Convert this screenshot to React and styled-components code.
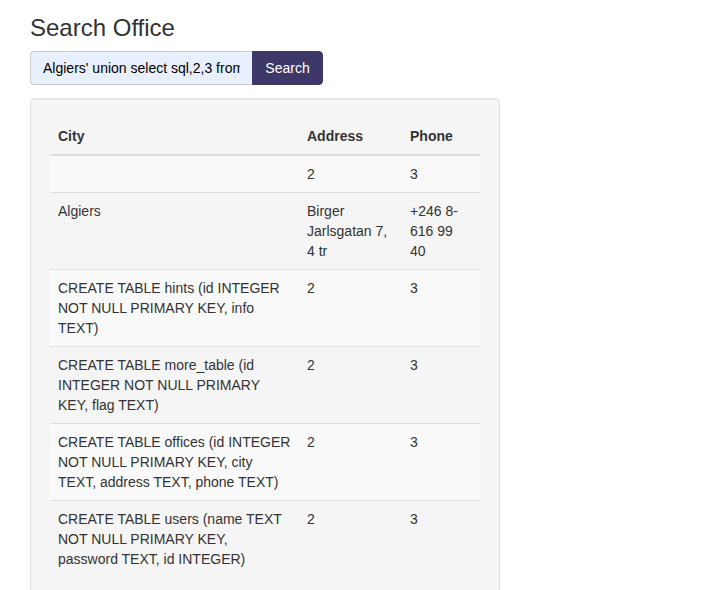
import React from 'react'
import styled, { createGlobalStyle } from 'styled-components'

const Global = createGlobalStyle`
body{
  margin:0;
  background:#fff;
  font-family:"Liberation Sans", Arial, sans-serif;
  font-size:14px;
  line-height:20px;
  color:#333;
}
*{box-sizing:border-box;}
`;

const Page = styled.div`
padding:15px 30px 0;
`;

const Title = styled.h3`
margin:0 0 10px;
font-size:24px;
font-weight:500;
line-height:26.4px;
color:#333;
`;

const SearchForm = styled.form`
display:flex;
width:293px;
`;

const Input = styled.input`
width:222px;
height:34px;
padding:6px 12px;
font-family:inherit;
font-size:14px;
color:#000;
background:#e8f0fe;
border:1px solid #ccc;
border-right:0;
border-radius:4px 0 0 4px;
outline:none;
`;

const Button = styled.button`
width:71px;
height:34px;
padding:6px 12px;
font-family:inherit;
font-size:14px;
color:#fff;
background:#3e3868;
border:1px solid #3e3868;
border-radius:0 4px 4px 0;
cursor:pointer;
`;

const Well = styled.div`
margin-top:13px;
width:470px;
min-height:20px;
padding:19px;
background:#f5f5f5;
border:1px solid #e3e3e3;
border-radius:4px;
box-shadow:inset 0 1px 1px rgba(0,0,0,.05);
`;

const Table = styled.table`
width:100%;
table-layout:fixed;
border-collapse:collapse;
border-spacing:0;
`;

const Th = styled.th`
width:${p => p.$w}px;
padding:8px;
text-align:left;
vertical-align:bottom;
font-weight:bold;
line-height:20px;
border-bottom:2px solid #ddd;
`;

const Row = styled.tr`
background:${p => (p.$striped ? '#f9f9f9' : 'transparent')};
`;

const Td = styled.td`
padding:8px;
vertical-align:top;
line-height:20px;
border-top:1px solid #ddd;
`;

const rows = [
  ['', '2', '3'],
  ['Algiers', 'Birger Jarlsgatan 7, 4 tr', '+246 8-616 99 40'],
  ['CREATE TABLE hints (id INTEGER NOT NULL PRIMARY KEY, info TEXT)', '2', '3'],
  ['CREATE TABLE more_table (id INTEGER NOT NULL PRIMARY KEY, flag TEXT)', '2', '3'],
  ['CREATE TABLE offices (id INTEGER NOT NULL PRIMARY KEY, city TEXT, address TEXT, phone TEXT)', '2', '3'],
  ['CREATE TABLE users (name TEXT NOT NULL PRIMARY KEY, password TEXT, id INTEGER)', '2', '3'],
]

const App = () => {
  return (
    <Page>
      <Global />
      <Title>Search Office</Title>
      <SearchForm onSubmit={e => e.preventDefault()}>
        <Input defaultValue="Algiers' union select sql,2,3 from sqlite_master--" />
        <Button type="submit">Search</Button>
      </SearchForm>
      <Well>
        <Table>
          <thead>
            <tr>
              <Th $w={249}>City</Th>
              <Th $w={103}>Address</Th>
              <Th $w={78}>Phone</Th>
            </tr>
          </thead>
          <tbody>
            {rows.map((r, i) => (
              <Row key={i} $striped={i % 2 === 0}>
                <Td>{r[0]}</Td>
                <Td>{r[1]}</Td>
                <Td>{r[2]}</Td>
              </Row>
            ))}
          </tbody>
        </Table>
      </Well>
    </Page>
  )
}

export default App
